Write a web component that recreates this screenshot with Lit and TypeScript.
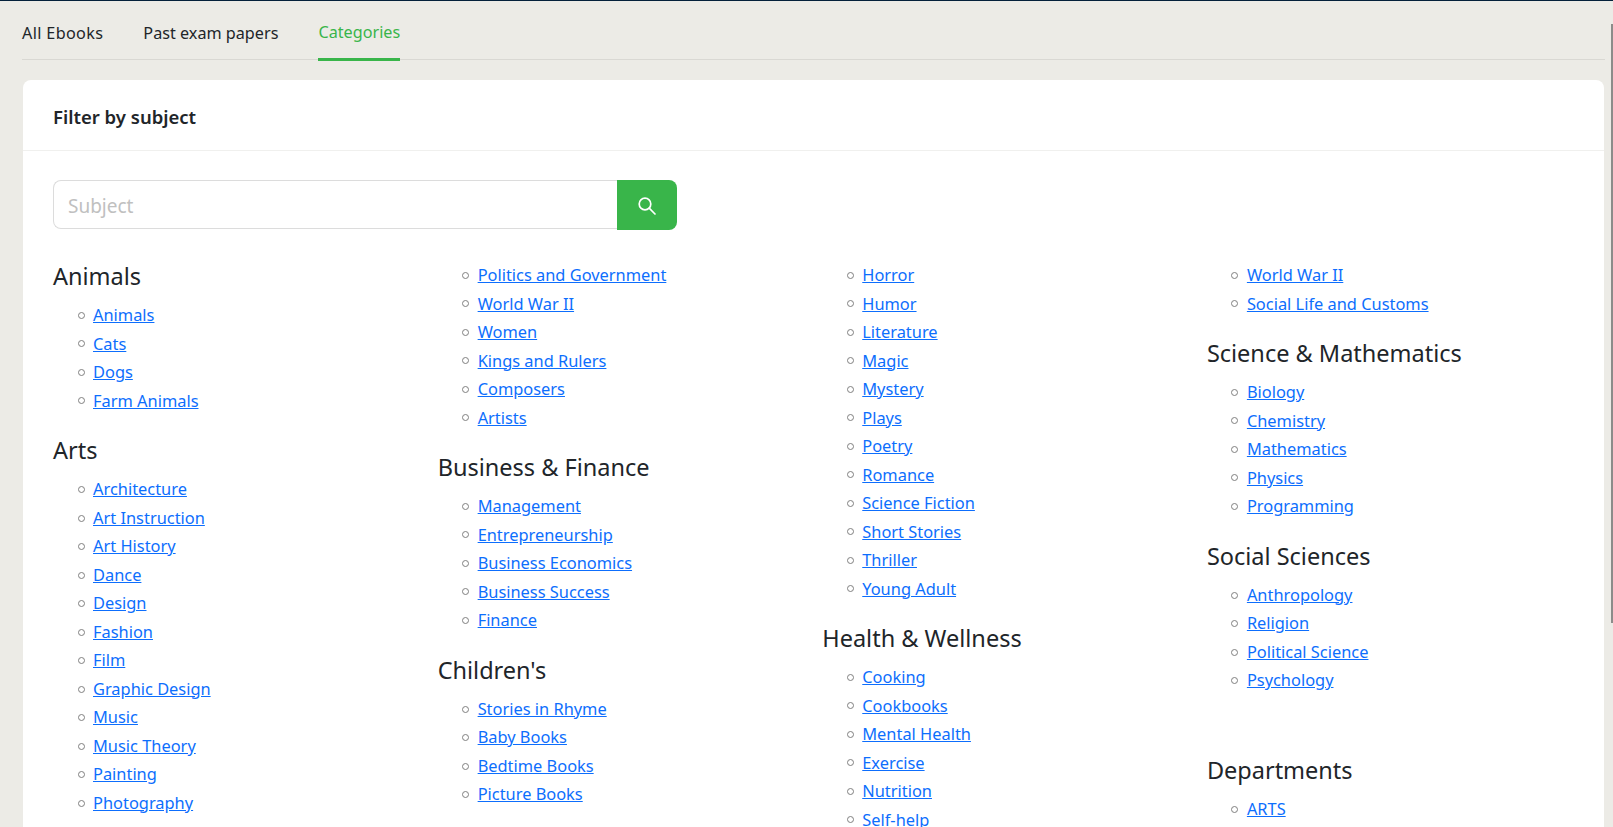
import { LitElement, html, css } from "lit";
import { customElement } from "lit/decorators.js";

type Block = { h?: string; items: string[]; spaced?: boolean };

const COLUMNS: Block[][] = [
  [
    { h: "Animals", items: ["Animals", "Cats", "Dogs", "Farm Animals"] },
    { h: "Arts", items: ["Architecture", "Art Instruction", "Art History", "Dance", "Design", "Fashion", "Film", "Graphic Design", "Music", "Music Theory", "Painting", "Photography"] },
  ],
  [
    { items: ["Politics and Government", "World War II", "Women", "Kings and Rulers", "Composers", "Artists"] },
    { h: "Business & Finance", items: ["Management", "Entrepreneurship", "Business Economics", "Business Success", "Finance"] },
    { h: "Children's", items: ["Stories in Rhyme", "Baby Books", "Bedtime Books", "Picture Books"] },
  ],
  [
    { items: ["Horror", "Humor", "Literature", "Magic", "Mystery", "Plays", "Poetry", "Romance", "Science Fiction", "Short Stories", "Thriller", "Young Adult"] },
    { h: "Health & Wellness", items: ["Cooking", "Cookbooks", "Mental Health", "Exercise", "Nutrition", "Self-help"] },
  ],
  [
    { items: ["World War II", "Social Life and Customs"] },
    { h: "Science & Mathematics", items: ["Biology", "Chemistry", "Mathematics", "Physics", "Programming"] },
    { h: "Social Sciences", items: ["Anthropology", "Religion", "Political Science", "Psychology"] },
    { h: "Departments", spaced: true, items: ["ARTS"] },
  ],
];

@customElement("app-root")
export class AppRoot extends LitElement {
  static styles = css`
    :host {
      display: block;
      position: relative;
      height: 827px;
      overflow: hidden;
      background: #ecebe6;
      border-top: 1px solid #04203a;
      box-sizing: border-box;
      font-family: "Noto Sans", sans-serif;
      color: #212529;
      font-size: 16.4px;
      line-height: 1.5;
      padding: 0 8px 0 22px;
    }
    .tabs {
      display: flex;
      gap: 40px;
      height: 58px;
      border-bottom: 1px solid #d9d8d3;
      box-sizing: content-box;
    }
    .tab {
      display: flex;
      align-items: center;
      height: 60px;
      padding-top: 5px;
      box-sizing: border-box;
      font-size: 16.2px;
      color: #212529;
      text-decoration: none;
    }
    .tab:first-child { letter-spacing: 0.35px; }
    .tab.active {
      color: #39b54a;
      border-bottom: 3px solid #39b54a;
    }
    .card {
      margin: 20px 1px 0;
      background: #fff;
      border-radius: 8px 8px 0 0;
      height: 760px;
    }
    .card-head {
      height: 71px;
      box-sizing: border-box;
      border-bottom: 1px solid #f0f0ee;
      padding: 3px 30px 0;
      display: flex;
      align-items: center;
      font-weight: 600;
      font-size: 18.5px;
    }
    .card-body {
      padding: 29px 30px;
    }
    .search {
      display: flex;
      width: 624px;
      height: 50px;
    }
    .search-input {
      flex: 1;
      min-width: 0;
      box-sizing: border-box;
      height: 49px;
      border: 1px solid #dcdcdc;
      border-right: 0;
      border-radius: 8px 0 0 8px;
      padding: 2px 14px 0;
      font: inherit;
      font-size: 19px;
      outline: none;
    }
    .search-input::placeholder { color: #c0c0c0; }
    .search-btn {
      width: 60px;
      border: 0;
      padding: 2px 0 0;
      background: #39b54a;
      border-radius: 0 8px 8px 0;
      display: flex;
      align-items: center;
      justify-content: center;
    }
    .cols {
      display: grid;
      grid-template-columns: repeat(4, 1fr);
      column-gap: 17.5px;
      margin-top: 32px;
    }
    h3 {
      margin: 0 0 12px;
      font-size: 23.5px;
      font-weight: 400;
      line-height: 1.2;
    }
    h3.spaced { margin-top: 62px; }
    ul {
      list-style: none;
      margin: 0 0 22px;
      padding: 0 0 0 24.5px;
    }
    li {
      display: flex;
      align-items: center;
      gap: 8.5px;
      margin-bottom: 2px;
      line-height: 26.5px;
    }
    li::before {
      content: "";
      flex: none;
      width: 7px;
      height: 7px;
      box-sizing: border-box;
      border: 1px solid #808080;
      border-radius: 50%;
    }
    a.link { color: #0d6efd; }
    .thumb {
      position: absolute;
      top: 23px;
      right: 0;
      width: 2px;
      height: 599px;
      background: #8c8c8a;
    }
  `;

  render() {
    return html`
      <nav class="tabs">
        <a class="tab">All Ebooks</a>
        <a class="tab">Past exam papers</a>
        <a class="tab active">Categories</a>
      </nav>
      <section class="card">
        <header class="card-head">Filter by subject</header>
        <div class="card-body">
          <div class="search">
            <input class="search-input" placeholder="Subject" />
            <button class="search-btn" aria-label="Search">
              <svg width="20" height="20" viewBox="0 0 20 20" fill="none" stroke="#fff" stroke-width="1.7" stroke-linecap="round">
                <circle cx="8" cy="8" r="5.8"></circle>
                <path d="M12.2 12.2 L18 18"></path>
              </svg>
            </button>
          </div>
          <div class="cols">
            ${COLUMNS.map(
              (col) => html`<div>
                ${col.map(
                  (b) => html`
                    ${b.h ? html`<h3 class=${b.spaced ? "spaced" : ""}>${b.h}</h3>` : ""}
                    <ul>
                      ${b.items.map((i) => html`<li><a class="link" href="#">${i}</a></li>`)}
                    </ul>
                  `
                )}
              </div>`
            )}
          </div>
        </div>
      </section>
      <div class="thumb"></div>
    `;
  }
}
